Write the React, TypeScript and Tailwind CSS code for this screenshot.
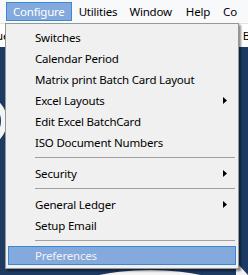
import type { ReactNode } from 'react'

type Item = { label: string; sub?: boolean } | 'sep'

const items: Item[] = [
  { label: 'Switches' },
  { label: 'Calendar Period' },
  { label: 'Matrix print Batch Card Layout' },
  { label: 'Excel Layouts', sub: true },
  { label: 'Edit Excel BatchCard' },
  { label: 'ISO Document Numbers' },
  'sep',
  { label: 'Security', sub: true },
  'sep',
  { label: 'General Ledger', sub: true },
  { label: 'Setup Email' },
  'sep',
]

function MenuRow({ children, sub }: { children: ReactNode; sub?: boolean }) {
  return (
    <div className="flex h-[21px] items-center pl-[29px] pr-[9px]">
      <span className="flex-1">{children}</span>
      {sub && (
        <svg width="4" height="7" viewBox="0 0 4 7" className="mr-[2px]">
          <path d="M0 0 L4 3.5 L0 7 Z" fill="#000" />
        </svg>
      )}
    </div>
  )
}

export default function App() {
  return (
    <div
      className="relative flex h-[275px] w-[248px] flex-col overflow-hidden text-[11.5px] tracking-[-0.2px] text-black"
      style={{ fontFamily: '"Noto Sans", "Open Sans", sans-serif' }}
    >
      {/* menu bar */}
      <div className="flex h-[23px] items-center bg-[#f8f9fa] pl-[6px]">
        <div className="flex h-[19px] items-center border border-[#3c89d3] bg-[#83a9dd] px-[6px] text-white">
          Configure
        </div>
        <span className="ml-[7px]">Utilities</span>
        <span className="ml-[12px]">Window</span>
        <span className="ml-[14px]">Help</span>
        <span className="ml-[13px] whitespace-nowrap">Co</span>
      </div>

      {/* toolbar strip */}
      <div className="flex h-[24px] items-center justify-between border-t border-[#e3e3e3] bg-white">
        <span className="-ml-[4px]">ue</span>
        <span className="mr-[-2px]">B</span>
      </div>

      {/* desktop behind */}
      <div className="relative flex-1 bg-[#1c3a62]">
        <svg width="248" height="228" className="absolute inset-0">
          <path d="M-20 50 A 24 24 0 0 1 -20 98" stroke="#f4f4f4" strokeWidth="6" fill="none" />
          <ellipse cx="150" cy="245" rx="80" ry="22" fill="#f4f4f4" />
          <path d="M236 215 L248 228 L236 228 Z" fill="#f4f4f4" />
        </svg>
      </div>

      {/* dropdown */}
      <div className="absolute left-[5px] top-[23px] w-[234px] border border-[#979797] bg-[#f0f0f0] pt-[3px] shadow-[2px_2px_2px_rgba(0,0,0,0.45)]">
        {items.map((it, i) =>
          it === 'sep' ? (
            <div key={i} className="ml-[29px] mr-[3px] my-[4px] h-[2px] border-t border-[#a0a0a0] border-b-white" />
          ) : (
            <MenuRow key={i} sub={it.sub}>
              {it.label}
            </MenuRow>
          ),
        )}
        <div className="mx-[2px] mb-[3px] flex h-[19px] items-center border border-[#3a86d0] bg-[#83a9dd] pl-[26px] text-[#f2f2f2]">
          Preferences
        </div>
      </div>
    </div>
  )
}
